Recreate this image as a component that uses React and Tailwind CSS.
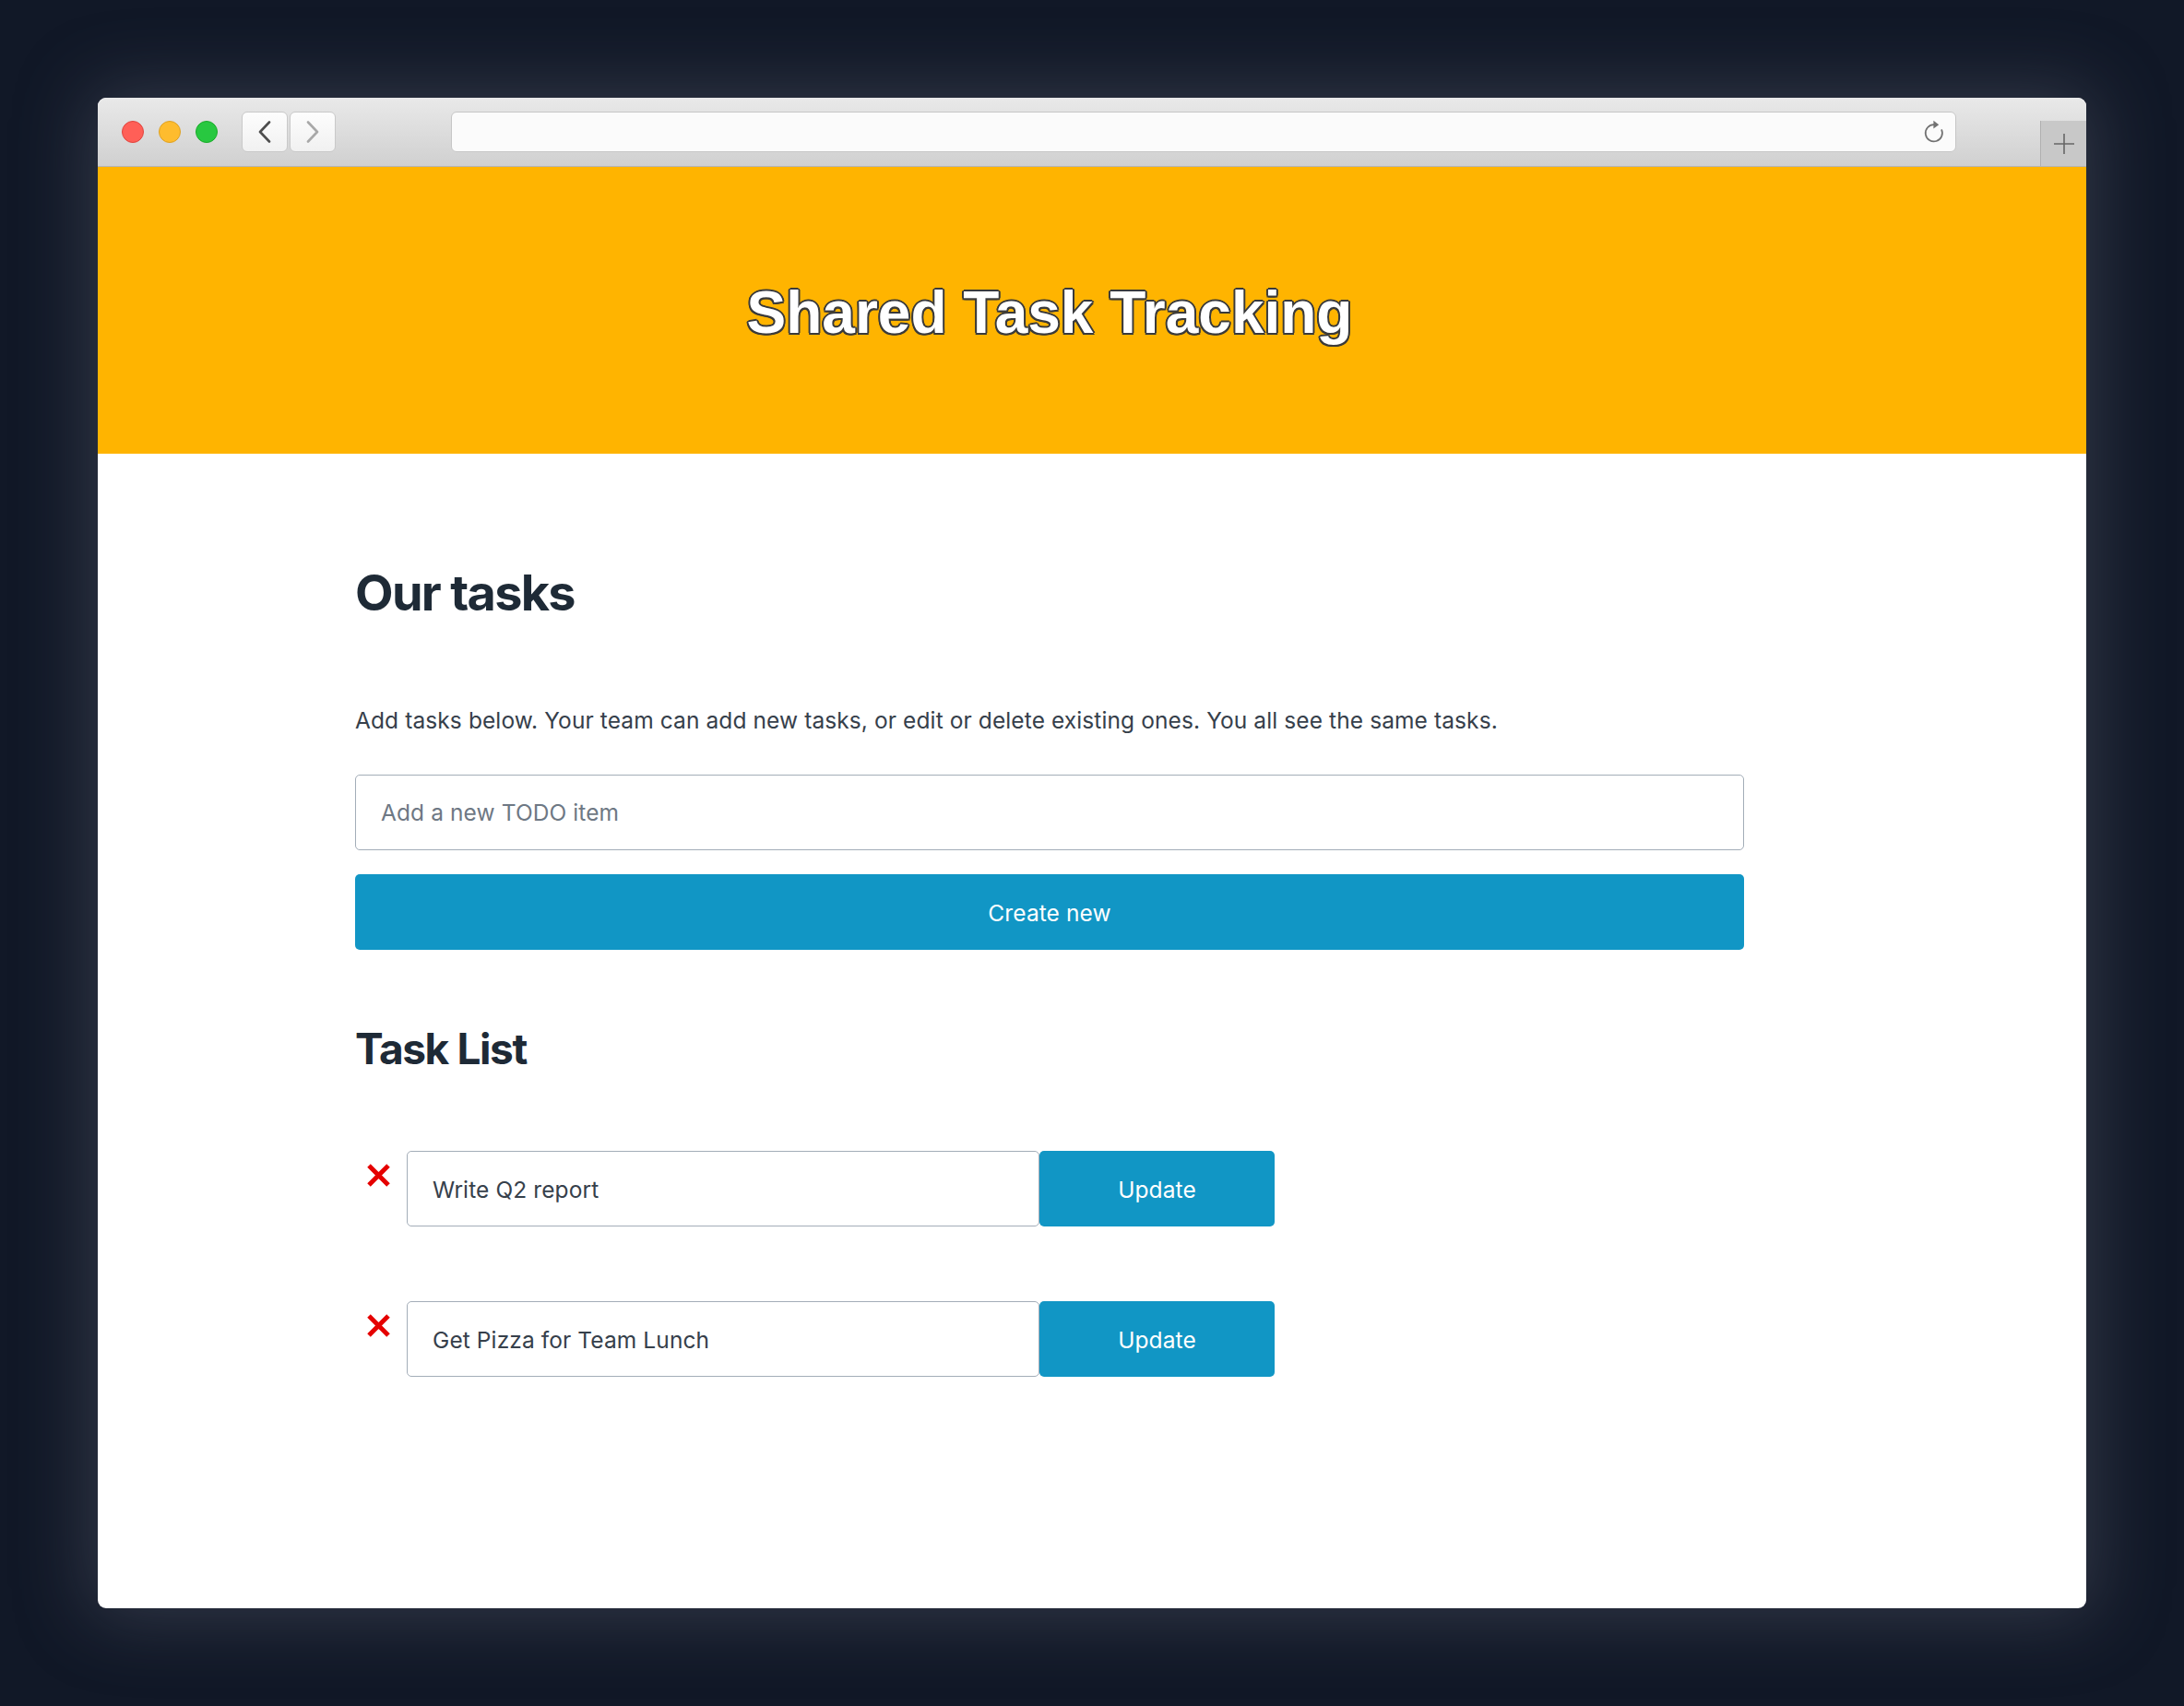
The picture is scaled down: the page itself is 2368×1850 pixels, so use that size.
const tasks = [
    { id: 1, text: "Write Q2 report" },
    { id: 2, text: "Get Pizza for Team Lunch" },
]

function Chevron({ dir, color }) {
    return (
        <svg width="16" height="24" viewBox="0 0 16 24" fill="none">
            <path
                d={dir === "left" ? "M13 1.5 L3 12 L13 22.5" : "M3 1.5 L13 12 L3 22.5"}
                stroke={color}
                strokeWidth="2.6"
                strokeLinecap="round"
                strokeLinejoin="round"
            />
        </svg>
    )
}

function Reload() {
    return (
        <svg width="26" height="26" viewBox="0 0 24 24" fill="none">
            <path d="M19.4 9.5 A8.4 8.4 0 1 1 12 4.8" stroke="#727272" strokeWidth="1.6" />
            <path d="M11.4 0.8 L16.8 4.8 L11.4 8.8 Z" fill="#727272" />
        </svg>
    )
}

function PlusIcon() {
    return (
        <svg width="24" height="24" viewBox="0 0 24 24" fill="none">
            <path d="M12 1 V23 M1 12 H23" stroke="#666" strokeWidth="1.6" />
        </svg>
    )
}

function CrossMark() {
    return (
        <svg width="27" height="25" viewBox="0 0 27 25">
            <path d="M3 2 L24 23 M24 2 L3 23" stroke="#e50000" strokeWidth="5" strokeLinecap="butt" />
        </svg>
    )
}

export default function App() {
    return (
        <div className="h-[1850px] w-full bg-[#111827] p-[106px] font-['Inter',sans-serif]">
            <div className="flex h-full flex-col overflow-hidden rounded-[9px] bg-white shadow-[0_0_80px_10px_rgba(90,96,110,0.45)]">

                {/* browser chrome */}
                <div className="flex h-[75px] shrink-0 items-center border-b border-[#b4b4b4] bg-gradient-to-b from-[#e9e9e9] to-[#d0d0d0] pl-[26px]">
                    <div className="flex gap-4">
                        <span className="h-6 w-6 rounded-full border border-[#e0443e] bg-[#ff5f57]" />
                        <span className="h-6 w-6 rounded-full border border-[#dea123] bg-[#febc2e]" />
                        <span className="h-6 w-6 rounded-full border border-[#1aab29] bg-[#28c840]" />
                    </div>
                    <div className="ml-[26px] flex gap-[2px]">
                        <div className="flex h-[44px] w-[50px] items-center justify-center rounded-[6px] border border-[#c9c9c9] bg-gradient-to-b from-[#fdfdfd] to-[#f1f1f1]">
                            <Chevron dir="left" color="#4d4d4d" />
                        </div>
                        <div className="flex h-[44px] w-[50px] items-center justify-center rounded-[6px] border border-[#c9c9c9] bg-gradient-to-b from-[#fdfdfd] to-[#f1f1f1]">
                            <Chevron dir="right" color="#a8a8a8" />
                        </div>
                    </div>
                    <div className="ml-[125px] flex h-[44px] w-[1632px] items-center justify-end rounded-[6px] border border-[#c6c6c6] bg-[#fbfbfb] pr-[10px]">
                        <Reload />
                    </div>
                    <div className="ml-auto flex h-[49px] w-[50px] items-center justify-center self-end border-l border-[#b0b0b0] bg-[#c8c8c8]">
                        <PlusIcon />
                    </div>
                </div>

                {/* banner */}
                <div className="flex h-[311px] shrink-0 items-center bg-[#ffb400] pl-[279px] pr-[371px] pt-[4px]">
                    <h1 className="w-full text-center font-['Liberation_Sans',Arial,sans-serif] text-[64px] font-bold leading-none text-white [text-shadow:-1.5px_-1.5px_0_#3a3a3a,1.5px_-1.5px_0_#3a3a3a,-1.5px_1.5px_0_#3a3a3a,1.5px_1.5px_0_#3a3a3a,0_-2px_0_#3a3a3a,0_2px_0_#3a3a3a,-2px_0_0_#3a3a3a,2px_0_0_#3a3a3a]">
                        Shared Task Tracking
                    </h1>
                </div>

                {/* content */}
                <div className="pl-[279px] pr-[371px]">
                    <h2 className="mt-[118px] text-[54px] font-bold leading-[65px] tracking-[-1.7px] text-[#1e2a36]">
                        Our tasks
                    </h2>
                    <p className="mt-[88px] text-[24.5px] leading-[36px] tracking-[0.1px] text-[#36404b]">
                        Add tasks below. Your team can add new tasks, or edit or delete existing ones. You all see the same tasks.
                    </p>
                    <input
                        type="text"
                        placeholder="Add a new TODO item"
                        className="mt-[41px] block h-[82px] w-full rounded-[5px] border-[1.5px] border-[#a3adb8] px-[27px] text-[24.5px] tracking-[0.1px] text-[#36404b] outline-none placeholder:text-[#6e7884]"
                    />
                    <button className="mt-[26px] block h-[82px] w-full rounded-[5px] bg-[#1196c5] pt-[3px] text-[24.5px] tracking-[0.1px] text-white">
                        Create new
                    </button>

                    <h3 className="mt-[80px] text-[46px] font-bold leading-[55px] tracking-[-1.4px] text-[#1e2a36]">
                        Task List
                    </h3>

                    <div className="mt-[83px] flex flex-col gap-[81px]">
                        {tasks.map((t) => (
                            <div key={t.id} className="flex items-start">
                                <div className="ml-[12px] mr-[17px] mt-[14px]">
                                    <CrossMark />
                                </div>
                                <input
                                    type="text"
                                    defaultValue={t.text}
                                    className="h-[82px] w-[686px] rounded-[5px] border-[1.5px] border-[#a3adb8] px-[27px] pt-[2px] text-[24.5px] tracking-[0.1px] text-[#36404b] outline-none"
                                />
                                <button className="h-[82px] w-[255px] rounded-[5px] bg-[#1196c5] pt-[2px] text-[24.5px] tracking-[0.1px] text-white">
                                    Update
                                </button>
                            </div>
                        ))}
                    </div>
                </div>
            </div>
        </div>
    )
}
